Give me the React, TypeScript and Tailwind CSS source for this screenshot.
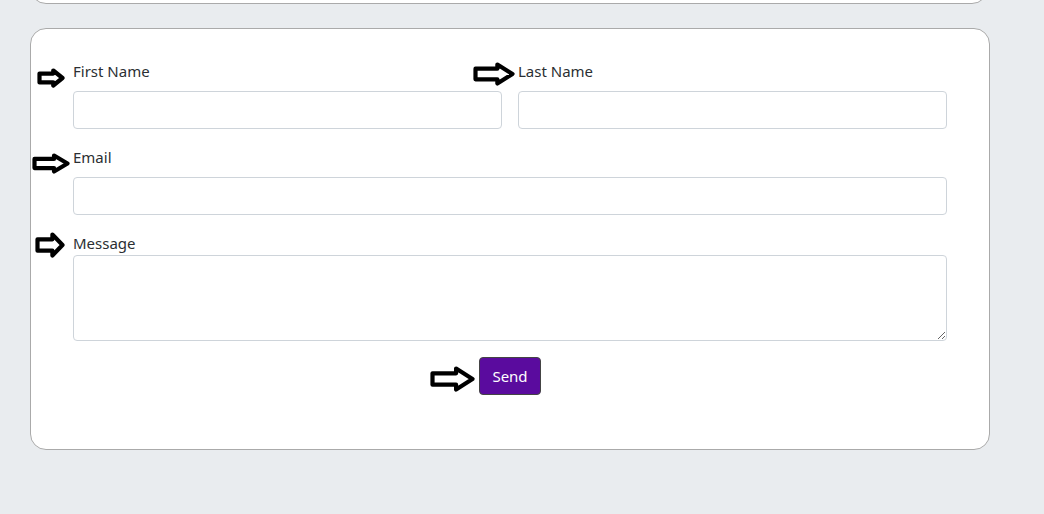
import React from "react";

type ArrowProps = {
  w: number;
  h: number;
  className?: string;
};

// hand-drawn looking outlined arrow that points at each field
function Arrow({ w, h, className }: ArrowProps) {
  const s = 2.5;
  const top = h * 0.28;
  const bottom = h * 0.72;
  const neck = w * 0.58;
  const points = [
    [s, top],
    [neck, top],
    [neck, s],
    [w - s, h / 2],
    [neck, h - s],
    [neck, bottom],
    [s, bottom],
  ]
    .map((p) => p.join(","))
    .join(" ");

  return (
    <svg width={w} height={h} viewBox={`0 0 ${w} ${h}`} className={className}>
      <polygon points={points} fill="white" stroke="black" strokeWidth={4.2} strokeLinejoin="round" />
    </svg>
  );
}

type FieldProps = {
  label: string;
  arrow: { w: number; h: number; pos: string };
  tight?: boolean;
  children: React.ReactNode;
};

function Field({ label, arrow, tight, children }: FieldProps) {
  return (
    <div className="flex flex-col">
      <label
        className={`relative text-[15px] leading-[22px] text-[#2b2f33] ${tight ? "mb-[1px]" : "mb-[9px]"}`}
      >
        <Arrow w={arrow.w} h={arrow.h} className={`absolute ${arrow.pos}`} />
        {label}
      </label>
      {children}
    </div>
  );
}

const inputClass =
  "h-[38px] w-full rounded-[4px] border border-[#ced4da] bg-white px-3 text-[15px] text-[#212529] outline-none";

export default function App() {
  return (
    <div
      className="min-h-[514px] bg-[#e9ecef] px-[30px] pb-10"
      style={{ fontFamily: '"Noto Sans", "Open Sans", Arial, sans-serif' }}
    >
      <div className="flex h-[4px] w-[958px] flex-col justify-end overflow-hidden">
        <div className="h-[40px] shrink-0 rounded-[16px] border border-[#aaaaaa] bg-white" />
      </div>

      <div className="mt-6 w-[960px] rounded-[16px] border border-[#aaaaaa] bg-white px-[42px] pt-[31px] pb-[54px]">
        <div className="grid grid-cols-2 gap-x-4">
          <Field label="First Name" arrow={{ w: 28, h: 20, pos: "left-[-36px] top-[8px]" }}>
            <input className={inputClass} />
          </Field>
          <Field label="Last Name" arrow={{ w: 42, h: 24, pos: "left-[-45px] top-[2px]" }}>
            <input className={inputClass} />
          </Field>
        </div>

        <div className="mt-[17px]">
          <Field label="Email" arrow={{ w: 38, h: 21, pos: "left-[-41px] top-[7px]" }}>
            <input type="email" className={inputClass} />
          </Field>
        </div>

        <div className="mt-[17px]">
          <Field label="Message" tight arrow={{ w: 30, h: 26, pos: "left-[-38px] top-[0px]" }}>
            <textarea className="h-[86px] w-full rounded-[4px] border border-[#ced4da] bg-white px-3 py-2 text-[15px] outline-none" />
          </Field>
        </div>

        <div className="mt-4 flex justify-center">
          <div className="relative">
            <Arrow w={45} h={26} className="absolute left-[-49px] top-[9px]" />
            <button
              type="button"
              className="h-[38px] rounded-[4px] border border-[#444] bg-[#5a0b9e] px-3 text-[15px] text-white"
            >
              Send
            </button>
          </div>
        </div>
      </div>
    </div>
  );
}
